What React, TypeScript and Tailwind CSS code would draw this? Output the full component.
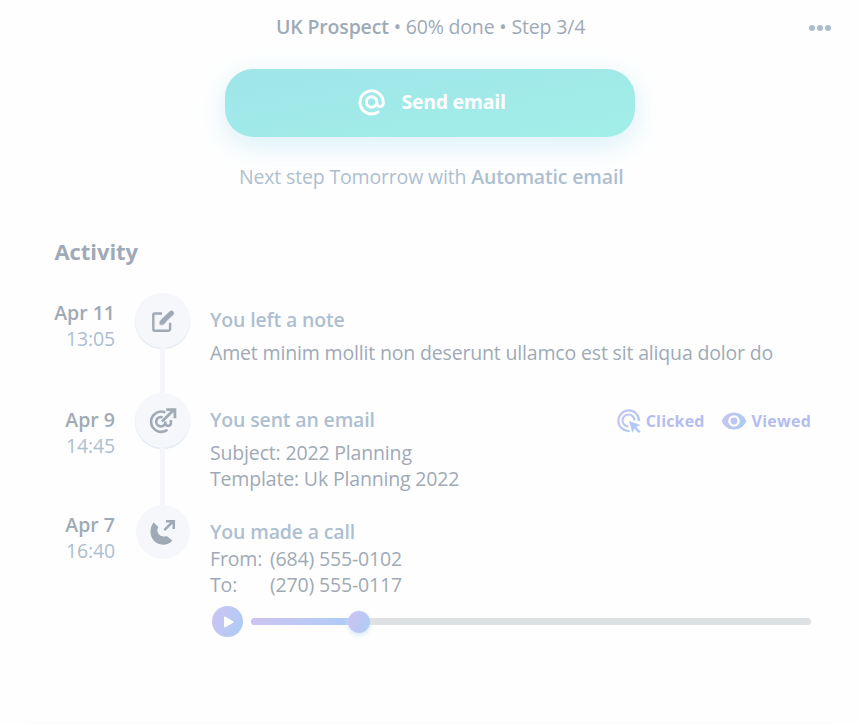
import React from "react";

const INK = "text-[#9faab6]";
const SOFT = "text-[#adbfd1]";

function AtIcon() {
  return (
    <svg width="28" height="28" viewBox="0 0 28 28" fill="none" stroke="white" strokeWidth="3" strokeLinecap="round">
      <circle cx="13.6" cy="14" r="5.2" />
      <path d="M20 24.1A11.6 11.6 0 1 1 25.2 14v1.4a3.1 3.1 0 0 1-6.4 0V14" />
    </svg>
  );
}

function NoteIcon() {
  return (
    <svg width="28" height="28" viewBox="0 -1.2 28 28" fill="none" stroke="#9faab6" strokeLinecap="round" strokeLinejoin="round">
      <path d="M13 5.3H5.8a1.5 1.5 0 0 0-1.5 1.5V21a1.5 1.5 0 0 0 1.5 1.5H19.6a1.5 1.5 0 0 0 1.5-1.5V14.5" strokeWidth="2.4" strokeLinecap="butt" />
      <path d="M14.4 12.6 22.5 4.9" strokeWidth="5" />
      <path d="M10.9 16.3v-3.2l3.2-2.6 2.9 3-2.6 2.8z" fill="#9faab6" strokeWidth=".6" />
    </svg>
  );
}

function SentIcon() {
  return (
    <svg width="28" height="28" viewBox="0 0 28 28" fill="none" stroke="#9faab6" strokeWidth="2.6">
      <path d="M15.3 5.1A10.1 10.1 0 1 0 17.5 23.3" strokeLinecap="round" />
      <path d="M13.5 10.3a4.7 4.7 0 1 0 2.7 6.3" />
      <path d="M16.3 14.5v1.6a2.8 2.8 0 0 0 5.6 0V13" />
      <path d="m13 14.5 12-12M17.2 2.6h8.7v8.7" strokeWidth="2.8" />
    </svg>
  );
}

function CallIcon() {
  return (
    <svg width="28" height="28" viewBox="0 0 28 28" fill="none">
      <path d="M4.6 4.3 9.3 9.1C6.2 14.5 11.500 20.400 17.700 18.100L23.400 22.800C18.800 27.800 11.500 27.900 6.300 24 .500 19.500 0 10.600 4.600 4.300Z" fill="#9faab6" />
      <path d="m15.3 12.2 8.7-8.7M17 3.3h7.8v7.8" stroke="#9faab6" strokeWidth="2.5" />
    </svg>
  );
}

function ClickedIcon() {
  return (
    <svg width="24" height="24" viewBox="0 0 24 24" fill="none">
      <defs>
        <linearGradient id="clicked" x1="0" y1="0" x2="24" y2="20" gradientUnits="userSpaceOnUse">
          <stop stopColor="#cbc3f2" />
          <stop offset="1" stopColor="#a9cbf4" />
        </linearGradient>
      </defs>
      <path d="M12.5 22A10.3 10.3 0 1 1 22 12" stroke="url(#clicked)" strokeWidth="2.2" />
      <path d="M11.5 17.5A6 6 0 1 1 17.5 11.5" stroke="url(#clicked)" strokeWidth="2.2" />
      <path d="m12 12 11.3 4-4.3 1.9 4.6 4.5-1.8 1.7-4.5-4.6-1.8 4.3Z" fill="url(#clicked)" />
    </svg>
  );
}

function ViewedIcon() {
  return (
    <svg width="26" height="18" viewBox="0 0 26 18">
      <defs>
        <linearGradient id="viewed" x1="0" y1="4" x2="25" y2="14" gradientUnits="userSpaceOnUse">
          <stop stopColor="#cbc3f2" />
          <stop offset="1" stopColor="#a9cbf4" />
        </linearGradient>
      </defs>
      <path fillRule="evenodd" d="M13 .5C7.4.5 2.7 4 .7 9c2 5 6.7 8.5 12.3 8.5S23.3 14 25.3 9C23.3 4 18.600.5 13 .5ZM13 14.8a5.8 5.8 0 1 1 0-11.6 5.8 5.8 0 0 1 0 11.6ZM13 5.6a3.4 3.4 0 1 0 0 6.8 3.4 3.4 0 0 0 0-6.8Z" fill="url(#viewed)" />
    </svg>
  );
}

function Row({ date, time, icon, raised = false, height, datePad = "pt-[7px]", last = false, children }: {
  date: string; time: string; icon: React.ReactNode; raised?: boolean; height: string; datePad?: string; last?: boolean; children: React.ReactNode;
}) {
  return (
    <section className={`flex ${height}`}>
      <div className={`w-[115px] text-right leading-[26px] ${datePad}`}>
        <div className={`font-semibold tracking-normal ${INK}`}>{date}</div>
        <div className={SOFT}>{time}</div>
      </div>
      <div className="ml-[19.5px] flex w-14 flex-col items-center">
        <div className={`flex shrink-0 items-center justify-center rounded-full bg-[#f5f7fb] ${raised ? "size-[55px] shadow-[0_1px_1px_#d9e4ee]" : "size-[54px]"}`}>{icon}</div>
        {!last && <div className="w-[5px] grow bg-[#f5f6fb]" />}
      </div>
      <div className="ml-[19.5px] w-[601px] leading-[26px]">{children}</div>
    </section>
  );
}

export default function App() {
  return (
    <main className="flex h-[724px] w-[860px] flex-col overflow-hidden bg-[#fefefe] font-['Open_Sans',sans-serif] text-[19.5px] tracking-[-0.0085em]">
      <header className={`flex h-[69px] shrink-0 pt-[14px] leading-[26px] ${INK}`}>
        <div className="ml-[276px] whitespace-nowrap"><b className="font-semibold">UK Prospect</b> • 60% done • Step 3/4</div>
        <div className="mt-[11px] mr-[29px] ml-auto flex h-[6px] gap-[2px]">
          {[0, 1, 2].map((i) => <i key={i} className="size-[6px] rounded-full bg-[#abbccd]" />)}
        </div>
      </header>
      <button className="ml-[225px] flex h-[68px] w-[410px] shrink-0 items-center rounded-[28px] bg-linear-[170deg,#9fe5ea,#a2eee7] pb-[2px] pl-[133px] font-bold tracking-[-0.014em] text-white shadow-[0_8px_28px_#d9f0f8]">
        <AtIcon /><span className="ml-[15.5px]">Send email</span>
      </button>
      <p className={`mt-[27px] ml-[239px] h-[26px] leading-[26px] whitespace-nowrap ${SOFT}`}>Next step Tomorrow with <b className="font-semibold">Automatic email</b></p>
      <h2 className={`mt-[46px] ml-[54.5px] h-[30px] text-[22px] leading-[30px] font-bold tracking-[-0.003em] ${INK}`}>Activity</h2>
      <div className="mt-[27px]">
        <Row date="Apr 11" time="13:05" icon={<NoteIcon />} raised height="h-[100px]">
          <h3 className={`pt-[14px] font-semibold ${SOFT}`}>You left a note</h3>
          <p className={`mt-[7px] whitespace-nowrap ${INK}`}>Amet minim mollit non deserunt ullamco est sit aliqua dolor do</p>
        </Row>
        <Row date="Apr 9" time="14:45" icon={<SentIcon />} raised height="h-[112px]" datePad="pt-[14px]">
          <div className="flex h-10 items-start pt-[14px]">
            <h3 className={`font-semibold ${SOFT}`}>You sent an email</h3>
            <div className="mt-px ml-auto flex h-[26px] items-center text-base font-bold tracking-normal text-[#b5bdf0]">
              <ClickedIcon /><span className="ml-[5px] tracking-[0.01em]">Clicked</span>
              <span className="ml-4"><ViewedIcon /></span><span className="ml-[5px] tracking-[0.015em]">Viewed</span>
            </div>
          </div>
          <div className={`mt-[7px] ${INK}`}><p>Subject: 2022 Planning</p><p>Template: Uk Planning 2022</p></div>
        </Row>
        <Row date="Apr 7" time="16:40" icon={<CallIcon />} last height="h-[133px]">
          <h3 className={`pt-[14px] font-semibold ${SOFT}`}>You made a call</h3>
          <dl className={`mt-px grid grid-cols-[60px_1fr] ${INK}`}>
            <dt>From:</dt><dd>(684) 555-0102</dd><dt>To:</dt><dd>(270) 555-0117</dd>
          </dl>
          <div className="mt-[8px] ml-[2px] flex items-center">
            <button className="flex size-[31px] items-center justify-center rounded-full bg-linear-[110deg,#cbc3f2_10%,#abcdf5]">
              <svg width="12" height="14" viewBox="0 0 12 14" className="ml-[2px]"><path d="M2 2.5v9l7.5-4.5Z" fill="white" stroke="white" strokeWidth="2" strokeLinejoin="round" /></svg>
            </button>
            <div className="ml-2 flex h-[7px] w-[560px] items-center rounded-full bg-[#dde1e4]">
              <div className="h-[7px] w-[108px] rounded-l-full bg-linear-to-r from-[#cbc3f2] to-[#abcdf5]" />
              <div className="-ml-[11px] size-[22px] rounded-full bg-linear-[110deg,#cbc3f2_10%,#abcdf5] shadow-[0_2px_5px_#d0e8f5]" />
            </div>
          </div>
        </Row>
      </div>
      <div className="mx-7 mt-auto h-px shrink-0 bg-[#fbfbfb]" />
    </main>
  );
}
